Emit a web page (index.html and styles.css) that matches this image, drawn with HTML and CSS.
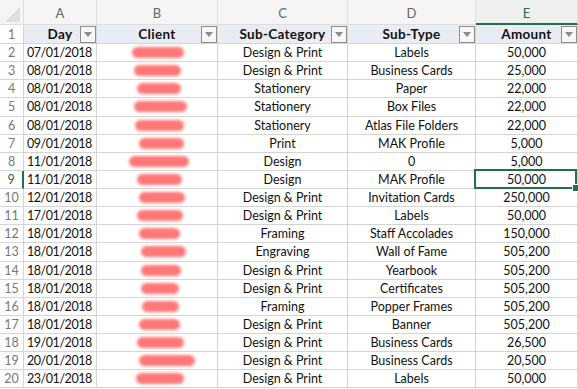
FILE: index.html
```html
<!DOCTYPE html>
<html>
<head>
<meta charset="utf-8">
<link rel="stylesheet" href="styles.css">
</head>
<body>
<div class="sheet">
  <div class="c ch corner"><svg class="tri" width="23" height="24" viewBox="0 0 23 24"><polygon points="5,21 20,21 20,6" fill="#dedede"/></svg></div>
  <div class="c ch">A</div><div class="c ch">B</div><div class="c ch">C</div><div class="c ch">D</div><div class="c ch csel">E</div>

  <div class="c rh">1</div>
  <div class="c hd">Day<span class="flt"><span class="arr"></span></span></div>
  <div class="c hd">Client<span class="flt"><span class="arr"></span></span></div>
  <div class="c hd">Sub-Category<span class="flt"><span class="arr"></span></span></div>
  <div class="c hd">Sub-Type<span class="flt"><span class="arr"></span></span></div>
  <div class="c hd">Amount<span class="flt"><span class="arr"></span></span></div>

  <div class="c rh">2</div><div class="c l date">07/01/2018</div><div class="c l"><span class="blob" style="--x:32px;--w:52px"></span></div><div class="c">Design &amp; Print</div><div class="c">Labels</div><div class="c">50,000</div>
  <div class="c rh">3</div><div class="c l date">08/01/2018</div><div class="c l"><span class="blob" style="--x:34px;--w:47px"></span></div><div class="c">Design &amp; Print</div><div class="c">Business Cards</div><div class="c">25,000</div>
  <div class="c rh">4</div><div class="c l date">08/01/2018</div><div class="c l"><span class="blob" style="--x:37px;--w:44px"></span></div><div class="c">Stationery</div><div class="c">Paper</div><div class="c">22,000</div>
  <div class="c rh">5</div><div class="c l date">08/01/2018</div><div class="c l"><span class="blob" style="--x:34px;--w:53px"></span></div><div class="c">Stationery</div><div class="c">Box Files</div><div class="c">22,000</div>
  <div class="c rh">6</div><div class="c l date">08/01/2018</div><div class="c l"><span class="blob" style="--x:35px;--w:49px"></span></div><div class="c">Stationery</div><div class="c">Atlas File Folders</div><div class="c">22,000</div>
  <div class="c rh">7</div><div class="c l date">09/01/2018</div><div class="c l"><span class="blob" style="--x:39px;--w:45px"></span></div><div class="c">Print</div><div class="c">MAK Profile</div><div class="c">5,000</div>
  <div class="c rh">8</div><div class="c l date">11/01/2018</div><div class="c l"><span class="blob" style="--x:29px;--w:60px"></span></div><div class="c">Design</div><div class="c">0</div><div class="c">5,000</div>
  <div class="c rh rsel">9</div><div class="c l date">11/01/2018</div><div class="c l"><span class="blob" style="--x:37px;--w:45px"></span></div><div class="c">Design</div><div class="c">MAK Profile</div><div class="c sel">50,000</div>
  <div class="c rh">10</div><div class="c l date">12/01/2018</div><div class="c l"><span class="blob" style="--x:39px;--w:46px"></span></div><div class="c">Design &amp; Print</div><div class="c">Invitation Cards</div><div class="c">250,000</div>
  <div class="c rh">11</div><div class="c l date">17/01/2018</div><div class="c l"><span class="blob" style="--x:37px;--w:46px"></span></div><div class="c">Design &amp; Print</div><div class="c">Labels</div><div class="c">50,000</div>
  <div class="c rh">12</div><div class="c l date">18/01/2018</div><div class="c l"><span class="blob" style="--x:39px;--w:41px"></span></div><div class="c">Framing</div><div class="c">Staff Accolades</div><div class="c">150,000</div>
  <div class="c rh">13</div><div class="c l date">18/01/2018</div><div class="c l"><span class="blob" style="--x:41px;--w:45px"></span></div><div class="c">Engraving</div><div class="c">Wall of Fame</div><div class="c">505,200</div>
  <div class="c rh">14</div><div class="c l date">18/01/2018</div><div class="c l"><span class="blob" style="--x:41px;--w:40px"></span></div><div class="c">Design &amp; Print</div><div class="c">Yearbook</div><div class="c">505,200</div>
  <div class="c rh">15</div><div class="c l date">18/01/2018</div><div class="c l"><span class="blob" style="--x:41px;--w:38px"></span></div><div class="c">Design &amp; Print</div><div class="c">Certificates</div><div class="c">505,200</div>
  <div class="c rh">16</div><div class="c l date">18/01/2018</div><div class="c l"><span class="blob" style="--x:42px;--w:37px"></span></div><div class="c">Framing</div><div class="c">Popper Frames</div><div class="c">505,200</div>
  <div class="c rh">17</div><div class="c l date">18/01/2018</div><div class="c l"><span class="blob" style="--x:39px;--w:41px"></span></div><div class="c">Design &amp; Print</div><div class="c">Banner</div><div class="c">505,200</div>
  <div class="c rh">18</div><div class="c l date">19/01/2018</div><div class="c l"><span class="blob" style="--x:37px;--w:47px"></span></div><div class="c">Design &amp; Print</div><div class="c">Business Cards</div><div class="c">26,500</div>
  <div class="c rh">19</div><div class="c l date">20/01/2018</div><div class="c l"><span class="blob" style="--x:39px;--w:56px"></span></div><div class="c">Design &amp; Print</div><div class="c">Business Cards</div><div class="c">20,500</div>
  <div class="c rh">20</div><div class="c l date">23/01/2018</div><div class="c l"><span class="blob" style="--x:36px;--w:48px"></span></div><div class="c">Design &amp; Print</div><div class="c">Labels</div><div class="c">50,000</div>
</div>
</body>
</html>
```

FILE: styles.css
```css
* { box-sizing: border-box; }
html, body { margin: 0; padding: 0; background: #fff; }
body { font-family: Lato, "Open Sans", "Liberation Sans", sans-serif; overflow: hidden; }

.sheet {
  display: grid;
  grid-template-columns: 24px 73px 121px 130px 128px 102px;
  grid-template-rows: 25px 19px repeat(19, 18.13px);
  width: 578px;
}

.c {
  display: flex;
  align-items: center;
  justify-content: center;
  border-right: 1px solid #d5d5d5;
  border-bottom: 1px solid #d5d5d5;
  font-size: 12.5px;
  color: #111;
  white-space: nowrap;
  overflow: hidden;
  min-width: 0;
  position: relative;
}
.l { justify-content: flex-start; padding-left: 3px; }
.date { letter-spacing: -0.45px; }

.ch {
  background: #f5f5f5;
  color: #666;
  font-size: 13px;
  border-color: #dedede;
  padding-top: 1px;
}
.corner { background: #f5f5f5; align-items: stretch; justify-content: stretch; }
.tri { display: block; }
.csel {
  color: #217346;
  background: #eef0ef;
  border-bottom: 2px solid #217346;
  padding-top: 2px;
}

.rh { color: #777; font-size: 12.5px; }
.rsel { color: #217346; border-right: 2px solid #217346; }

.hd {
  background: #e9ecf2;
  font-weight: 700;
  font-size: 13.5px;
  letter-spacing: 0.3px;
  color: #111;
}
.flt {
  position: absolute;
  right: 0;
  top: 1px;
  bottom: 0;
  width: 16px;
  border: 1px solid #8e8e8e;
  background: #f7f7f7;
  display: flex;
  align-items: center;
  justify-content: center;
}
.arr {
  width: 0;
  height: 0;
  border-left: 4px solid transparent;
  border-right: 4px solid transparent;
  border-top: 5px solid #8a8a8a;
}

.blob {
  display: block;
  margin-left: var(--x);
  width: var(--w);
  height: 11px;
  border-radius: 6px;
  background: #ff7878;
  filter: blur(1.4px);
}

.sel { overflow: visible; z-index: 2; }
.sel::after {
  content: "";
  position: absolute;
  left: -2px;
  right: 0;
  top: -2px;
  bottom: -1px;
  border: 2px solid #1f7244;
}
.sel::before {
  content: "";
  position: absolute;
  right: -3px;
  bottom: -4px;
  width: 6px;
  height: 6px;
  background: #1f7244;
  border: 1px solid #fff;
  z-index: 3;
}
```
